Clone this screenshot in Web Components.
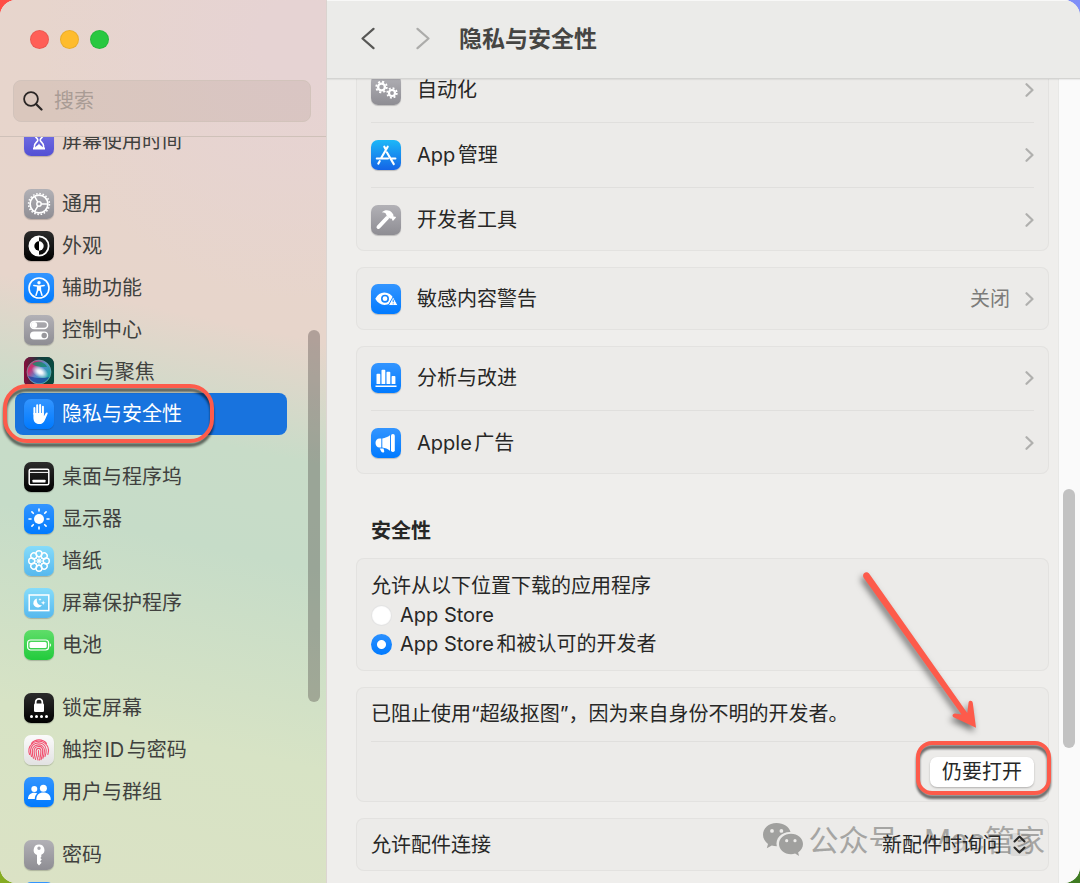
<!DOCTYPE html>
<html lang="zh-CN">
<head>
<meta charset="utf-8">
<title>隐私与安全性</title>
<style>
html {
  height: 100%;
}
body {
  margin: 0;
  height: 100%;
  overflow: hidden;
  font-family: Inter, "Noto Sans CJK SC", sans-serif;
  font-size: 20px;
  line-height: 30px;
  text-autospace: normal;
  color: #272726;
  background:
    linear-gradient(90deg, #ff4d45, #7f8ff8) top / 100% 50% no-repeat,
    linear-gradient(90deg, #86ac22, #3f7b22) bottom / 100% 50% no-repeat;
}
</style>
</head>
<body>
<settings-window>
  <settings-sidebar slot="sidebar">
    <sidebar-group>
      <sidebar-item icon="hourglass">屏幕使用时间</sidebar-item>
    </sidebar-group>
    <sidebar-group>
      <sidebar-item icon="gear">通用</sidebar-item>
      <sidebar-item icon="appearance">外观</sidebar-item>
      <sidebar-item icon="accessibility">辅助功能</sidebar-item>
      <sidebar-item icon="control">控制中心</sidebar-item>
      <sidebar-item icon="siri">Siri与聚焦</sidebar-item>
      <sidebar-item icon="hand" selected>隐私与安全性</sidebar-item>
    </sidebar-group>
    <sidebar-group>
      <sidebar-item icon="dock">桌面与程序坞</sidebar-item>
      <sidebar-item icon="display">显示器</sidebar-item>
      <sidebar-item icon="wallpaper">墙纸</sidebar-item>
      <sidebar-item icon="saver">屏幕保护程序</sidebar-item>
      <sidebar-item icon="battery">电池</sidebar-item>
    </sidebar-group>
    <sidebar-group>
      <sidebar-item icon="lock">锁定屏幕</sidebar-item>
      <sidebar-item icon="touch">触控ID与密码</sidebar-item>
      <sidebar-item icon="users">用户与群组</sidebar-item>
    </sidebar-group>
    <sidebar-group>
      <sidebar-item icon="key">密码</sidebar-item>
      <sidebar-item icon="blank"></sidebar-item>
    </sidebar-group>
  </settings-sidebar>

  <settings-toolbar slot="toolbar">隐私与安全性</settings-toolbar>

  <settings-card>
    <settings-row icon="automation">自动化</settings-row>
    <settings-row icon="appstore">App管理</settings-row>
    <settings-row icon="hammer">开发者工具</settings-row>
  </settings-card>
  <settings-card>
    <settings-row icon="sensitive" value="关闭">敏感内容警告</settings-row>
  </settings-card>
  <settings-card>
    <settings-row icon="analytics">分析与改进</settings-row>
    <settings-row icon="ads">Apple广告</settings-row>
  </settings-card>
  <section-title>安全性</section-title>
  <settings-card>
    <download-source></download-source>
  </settings-card>
  <settings-card>
    <blocked-app></blocked-app>
    <blocked-action></blocked-action>
  </settings-card>
  <settings-card>
    <accessory-row></accessory-row>
  </settings-card>
</settings-window>

<script>
const blue = ['#3395ff', '#007aff'];
const gray = ['#b2b1b6', '#8e8d93'];
const black = ['#2c2c2c', '#000'];
const sky = ['#86dcfa', '#56b8ee'];

const stroke = 'fill="none" stroke="#fff"';

// every glyph is drawn on a 30 x 30 tile
const icons = {
  hourglass: {
    tile: ['#7b78e8', '#5350d4'],
    glyph: `<path d="M9 5.500h12M9 22.500h12" ${stroke} stroke-width="2"/>
      <path d="M10.500 6v2.500c0 2.500 3.300 3.500 3.300 5.500s-3.300 3-3.300 5.500V22h9v-2.500c0-2.500-3.300-3.500-3.300-5.500s3.300-3 3.300-5.500V6" ${stroke} stroke-width="1.600"/>
      <path d="M11.500 22c0-2.500 3.500-2.500 3.500-5 0 2.500 3.500 2.500 3.500 5z" fill="#fff"/>`,
  },
  gear: {
    tile: gray,
    glyph: `<circle cx="15" cy="15" r="10.400" ${stroke} stroke-width="1.600" stroke-dasharray="1.600 1.667"/>
      <circle cx="15" cy="15" r="8.900" ${stroke} stroke-width="1.700"/>
      <circle cx="15" cy="15" r="2.200" ${stroke} stroke-width="1.500"/>
      <path d="M17.200 15h6.500M13.900 13.100 10.600 7.400M13.900 16.900l-3.300 5.700" ${stroke} stroke-width="1.500"/>`,
  },
  appearance: {
    tile: black,
    glyph: `<circle cx="15" cy="15" r="9.600" ${stroke} stroke-width="1.800"/>
      <path d="M15 5.400a9.600 9.600 0 0 0 0 19.200z" fill="#fff"/>
      <path d="M15 10.300a4.700 4.700 0 0 0 0 9.400z" fill="#000"/>
      <path d="M15 10.300a4.700 4.700 0 0 1 0 9.400z" fill="#fff"/>`,
  },
  accessibility: {
    tile: blue,
    glyph: `<circle cx="15" cy="15" r="10" ${stroke} stroke-width="1.600"/>
      <circle cx="15" cy="9.700" r="1.700" fill="#fff"/>
      <path d="M9.800 12.400 15 13.300l5.200-.9M15 13.300v4M13.700 13.500l-.2 4-1.500 4.700M16.300 13.500l.2 4 1.500 4.700M14 16h2" ${stroke} stroke-width="1.500" stroke-linecap="round" stroke-linejoin="round"/>`,
  },
  control: {
    tile: gray,
    glyph: `<rect x="6.600" y="6.600" width="17" height="7" rx="3.500" ${stroke} stroke-width="1.500"/>
      <circle cx="10.200" cy="10.100" r="3" fill="#fff"/>
      <rect x="6" y="16.500" width="18.200" height="8" rx="4" fill="#fff"/>
      <circle cx="20.200" cy="20.500" r="2.700" fill="#98979c"/>`,
  },
  siri: {
    tile: ['#3a1634', '#10203a'],
    glyph: `<defs>
        <linearGradient id="edge"><stop stop-color="#8a0c3c"/><stop offset=".5" stop-color="#163b3c"/><stop offset="1" stop-color="#064c40"/></linearGradient>
        <linearGradient id="orb" x2="1" y2=".7"><stop stop-color="#4f8d78"/><stop offset=".25" stop-color="#d22c6c"/><stop offset=".55" stop-color="#5a8bd0"/><stop offset="1" stop-color="#15aaa0"/></linearGradient>
        <radialGradient id="glow"><stop stop-color="#fff"/><stop offset=".3" stop-color="#fff" stop-opacity=".9"/><stop offset="1" stop-color="#fff" stop-opacity="0"/></radialGradient>
      </defs>
      <rect width="30" height="30" rx="7" fill="url(#edge)"/>
      <circle cx="15" cy="15" r="12" fill="url(#orb)"/>
      <path d="M4 19c4 9 17 10 21 1-6 2-14 1-21-1z" fill="#1b3a9c" opacity=".7"/>
      <path d="M8 7c5-4 13-2 15 3-5 0-9 1-15-3z" fill="#17896a" opacity=".8"/>
      <ellipse cx="16" cy="15" rx="9" ry="5.500" fill="url(#glow)" transform="rotate(30 16 15)"/>
      <circle cx="15" cy="15" r="12" fill="none" stroke="#7fa9b4" stroke-width=".6"/>`,
  },
  hand: {
    tile: blue,
    glyph: `<path d="M10.400 15V9M13.200 14V6.300M16.100 14V6M18.900 15V7.800" ${stroke} stroke-width="2" stroke-linecap="round"/>
      <path d="M9.400 14h10.500v3.200l1.900-3.200c.7-1.100 2.200-.5 1.800.7l-2.700 6.200c-1.100 2.700-2.900 4.200-5.700 4.200-3.700 0-5.800-2.500-5.800-6.300z" fill="#fff"/>`,
  },
  dock: {
    tile: black,
    glyph: `<rect x="5.200" y="7.200" width="19.600" height="15.600" rx="1.500" ${stroke} stroke-width="1.500"/>
      <path d="M5.500 10.400h19" ${stroke} stroke-width="1"/>
      <rect x="8.500" y="17.700" width="13" height="2.800" rx=".6" fill="#fff"/>`,
  },
  display: {
    tile: blue,
    glyph: `<circle cx="15" cy="15" r="5" fill="#fff"/>
      <path d="M15 5v2M15 23v2M5 15h2M23 15h2M7.900 7.900l1.400 1.400M20.700 20.700l1.400 1.400M7.900 22.100l1.400-1.400M20.700 9.300l1.400-1.400" ${stroke} stroke-width="1.600" stroke-linecap="round"/>`,
  },
  wallpaper: {
    tile: sky,
    glyph: `<g ${stroke} stroke-width="1.400">
        ${[0, 45, 90, 135, 180, 225, 270, 315].map((a) => `<circle cx="15" cy="7.700" r="3" transform="rotate(${a} 15 15)"/>`).join('')}
        <path d="M15 11v8M11 15h8M12.200 12.200l5.600 5.600M17.800 12.200l-5.600 5.600" stroke-width=".9"/>
      </g>
      <circle cx="15" cy="15" r="1.800" fill="#fff"/>`,
  },
  saver: {
    tile: sky,
    glyph: `<rect x="5.200" y="7" width="19.600" height="15.600" ${stroke} stroke-width="1.500"/>
      <path d="M13 10.500a4.600 4.600 0 1 0 5 6.600c-3.700.8-6-3-5-6.600z" fill="#fff"/>
      <path d="m19.200 12.500.6 1.700 1.700.6-1.700.6-.6 1.700-.6-1.700-1.700-.6 1.700-.6zM16 10l.4 1.100 1.100.4-1.100.4L16 13l-.4-1.100-1.100-.4 1.100-.4z" fill="#fff"/>`,
  },
  battery: {
    tile: ['#5fdd69', '#22cb3c'],
    glyph: `<rect x="3.600" y="10" width="21" height="10" rx="3" ${stroke} stroke-width="1.200"/>
      <rect x="5.500" y="11.900" width="17.200" height="6.200" rx="1.500" fill="#fff"/>
      <path d="M25.900 13.200v3.600c1.500-.5 1.500-3.100 0-3.600z" fill="#fff"/>`,
  },
  lock: {
    tile: black,
    glyph: `<path d="M11.700 11V8.800c0-4 6.600-4 6.600 0V11" ${stroke} stroke-width="1.700"/>
      <rect x="10" y="10.500" width="10" height="8.500" rx="1.300" fill="#fff"/>
      <path d="M7.500 23.500h.01M12.500 23.500h.01M17.500 23.500h.01M22.500 23.500h.01" ${stroke} stroke-width="3" stroke-linecap="round"/>`,
  },
  touch: {
    tile: ['#fbfbfb', '#e2e2e2'],
    glyph: `<g fill="none" stroke="#f2506f" stroke-width="1.100" stroke-linecap="round">
        <path d="M7.500 8.400C11.500 3.700 18.500 3.700 22.500 8.400"/>
        <path d="M5.600 19.500c-1.500-4-.6-8 1.500-9.500C11 5 19 5 23 10.500c1.700 2.500 1.900 5.500.8 9"/>
        <path d="M7.500 21.500c-.8-2-1.200-4-1-6.200C7 6 21.500 5 22.200 14.700c.1 2.500-.2 4.500-1.200 6.800"/>
        <path d="M9.500 23.300c-.8-2-1.300-4.600-1.200-7.600C8.700 8 20 8 20.400 15c.1 3-.5 5.700-1.500 8.300"/>
        <path d="M11.600 24.500c-.9-2.500-1.600-5.500-1.500-8.500.3-6 8.200-6 8.600-.6.100 3.300-.6 6.300-1.600 9.200"/>
        <path d="M14 25c-1.200-3-2-6-1.900-9 .3-3.500 4.500-3.500 4.800-.2.100 3.200-.5 6.200-1.300 9.200"/>
        <path d="M14.500 15.500c0 3 .2 4.500.4 6.500"/>
      </g>`,
  },
  users: {
    tile: blue,
    glyph: `<circle cx="10.300" cy="12" r="3" fill="#fff"/>
      <path d="M4 22c0-4 2.500-6.300 6.300-6.300 1.200 0 2.200.3 3 .8-1.600 1.300-2.500 3.200-2.500 5.500z" fill="#fff"/>
      <circle cx="19.400" cy="11.200" r="3.500" fill="#fff"/>
      <path d="M12.300 22.400c0-4.300 2.900-6.900 7.100-6.900s7.300 2.600 7.300 6.900c0 .4-.3.600-.7.600H13c-.4 0-.7-.2-.7-.6z" fill="#fff"/>`,
  },
  key: {
    tile: gray,
    glyph: `<path fill-rule="evenodd" d="M15 4.500a5.400 5.400 0 0 0-2 10.400v8.400l2 2.200 2.600-2.700-1.500-1.600 1.700-1.700-1.500-1.600 1-1v-2.100A5.400 5.400 0 0 0 15 4.500zm0 2.100a1.700 1.700 0 1 1 0 3.400 1.700 1.700 0 0 1 0-3.400z" fill="#fff"/>`,
  },
  blank: { tile: blue, glyph: '' },
  automation: {
    tile: gray,
    glyph: `<g ${stroke}>
        <circle cx="10.500" cy="12" r="3.400" stroke-width="2.300"/>
        <circle cx="10.500" cy="12" r="5.300" stroke-width="1.800" stroke-dasharray="2.080 2.080"/>
        <circle cx="21" cy="18" r="3" stroke-width="2.200"/>
        <circle cx="21" cy="18" r="4.800" stroke-width="1.800" stroke-dasharray="1.885 1.885"/>
      </g>`,
  },
  appstore: {
    tile: ['#1db8f8', '#1464e6'],
    glyph: `<path d="M16.700 6.700 10.300 17.800M13.300 6.700l1.400 2.500M15.800 12.300l7 11.800M8.700 21.200l-1.400 2.400M5.800 18.500h11.200M20.500 18.500h3.900" ${stroke} stroke-width="2.100" stroke-linecap="round"/>`,
  },
  hammer: {
    tile: gray,
    glyph: `<path d="M7.500 22 16 13" ${stroke} stroke-width="4" stroke-linecap="round"/>
      <path d="M10.800 7.200c3.200-2.900 7.600-2.600 10 .2l1.500 2 .2 2 2 .3c.5.200.6.600.3 1l-2.400 2.900c-.3.300-.8.200-1-.1l-.5-1.700-2-.2-3.600-3.300c.2-2-1.700-3.100-4.500-3.100z" fill="#fff"/>`,
  },
  sensitive: {
    tile: blue,
    glyph: `<path d="M4.300 14.700C6.500 10.800 9.700 8.600 13.300 8.600c4 0 7.300 2 9.600 6.100-2 4-5.400 6.200-9.400 6.200-3.700 0-7-2.200-9.200-6.200z" fill="#fff"/>
      <circle cx="14" cy="14.700" r="3.200" fill="none" stroke="#1686ff" stroke-width="1.600"/>
      <path d="M22.200 12.700 27 21.500h-9.700z" fill="#fff" stroke="#1686ff" stroke-width="1"/>
      <path d="M22.200 15.500v2.700M22.200 19.500v.8" fill="none" stroke="#1686ff" stroke-width="1.100"/>`,
  },
  analytics: {
    tile: blue,
    glyph: `<path d="M5.500 11.500c0-.5.300-.8.800-.8h2.200c.5 0 .8.300.8.800v9.500H5.500zM10.500 7.500c0-.5.300-.8.800-.8h2.200c.5 0 .8.300.8.800V21h-3.800zM15.500 9.500c0-.5.300-.8.800-.8h2.200c.5 0 .8.300.8.800V21h-3.800zM20.600 13.700c0-.5.300-.8.800-.8h2.200c.5 0 .8.300.8.800V21h-3.800zM4.500 22.500h21V24h-21z" fill="#fff"/>`,
  },
  ads: {
    tile: blue,
    glyph: `<path d="M10.300 10.500v9H8.500c-2.300 0-4-2-4-4.500s1.700-4.500 4-4.500zM11.300 10.400c2.800-.3 5.500-1.600 7.700-3.200v15.600c-2.200-1.700-4.900-2.900-7.700-3.200z" fill="#fff"/>
      <rect x="20" y="6" width="3.800" height="18" rx="1.800" fill="#fff"/>
      <path d="M8.700 20.500h3.800l.7 2.500c.4 1.700-2 2.200-2.800.8z" fill="#fff"/>`,
  },
};

class BaseElement extends HTMLElement {
  constructor() {
    super();
    this.attachShadow({ mode: 'open' });
  }
  connectedCallback() {
    this.shadowRoot.innerHTML = this.html;
  }
}

class SettingsIcon extends BaseElement {
  get html() {
    const { tile, glyph } = icons[this.getAttribute('name')];
    return `
      <style>
        :host {
          display: block;
          flex-shrink: 0;
          width: 30px;
          height: 30px;
          border-radius: 7px;
          background: linear-gradient(${tile[0]}, ${tile[1]});
          box-shadow: 0 1px 1px rgba(0, 0, 0, 0.2);
        }
        svg { display: block; }
      </style>
      <svg width="30" height="30" viewBox="0 0 30 30" aria-hidden="true">${glyph}</svg>
    `;
  }
}

class SettingsWindow extends BaseElement {
  get html() {
    return `
      <style>
        :host {
          display: flex;
          height: 100%;
          border-radius: 16px;
          overflow: hidden;
          background-color: #efeeec;
        }
        main {
          flex: 1;
          min-width: 0;
          display: flex;
          flex-direction: column;
          border-left: 1px solid #dcd5d1;
        }
        .view {
          flex: 1;
          min-height: 0;
          display: flex;
        }
        .content {
          flex: 1;
          min-width: 0;
          overflow: hidden;
          padding: 0 9px 0 29px;
        }
        /* the list is scrolled part of the way down its first card */
        .scrolled {
          margin-top: -21px;
        }
        .track {
          flex-shrink: 0;
          box-sizing: border-box;
          width: 22px;
          padding: 410px 4px 0;
          background-color: #fafafa;
          border-left: 1px solid #e8e8e6;
        }
        .thumb {
          height: 259px;
          width: 12px;
          border-radius: 6px;
          background-color: #c2c2c2;
        }
      </style>
      <slot name="sidebar"></slot>
      <main>
        <slot name="toolbar"></slot>
        <div class="view">
          <div class="content"><div class="scrolled"><slot></slot></div></div>
          <div class="track"><div class="thumb"></div></div>
        </div>
      </main>
    `;
  }
}

class SettingsSidebar extends BaseElement {
  get html() {
    return `
      <style>
        :host {
          flex-shrink: 0;
          display: flex;
          flex-direction: column;
          position: relative;
          width: 326px;
          color: #40413e;
          background:
            radial-gradient(circle at 300px 40px, #e6d3d3 40px, rgba(230, 211, 211, 0) 260px),
            linear-gradient(192deg, #e7d5cd 0, #e7d5cb 36%, #c8dcc8 49%, #c6dcc8 60%, #d7e3c5 81%, #dbe2c5 100%);
        }
        header {
          flex-shrink: 0;
          box-sizing: border-box;
          height: 137px;
          padding: 30px 15px 0 13px;
          border-bottom: 1px solid #cfc1b9;
        }
        .lights {
          display: flex;
          gap: 11px;
          padding-left: 17px;
        }
        .lights button {
          width: 19px;
          height: 19px;
          padding: 0;
          border: 1px solid rgba(0, 0, 0, 0.08);
          border-radius: 50%;
        }
        label {
          display: flex;
          align-items: center;
          gap: 11px;
          box-sizing: border-box;
          height: 42px;
          margin-top: 31px;
          padding: 0 9px;
          border: 1px solid #d2c3bb;
          border-radius: 8px;
          background-color: rgba(120, 95, 80, 0.12);
        }
        input {
          flex: 1;
          min-width: 0;
          padding: 0;
          border: 0;
          outline: 0;
          background: none;
          font: inherit;
        }
        input::placeholder {
          color: #a99c95;
        }
        nav {
          flex: 1;
          min-height: 0;
          overflow: hidden;
        }
        .scrolled {
          margin-top: -17px;
        }
        .thumb {
          position: absolute;
          right: 6px;
          top: 330px;
          width: 12px;
          height: 372px;
          border-radius: 6px;
          background-color: rgba(60, 50, 50, 0.32);
        }
      </style>
      <header>
        <div class="lights">
          <button style="background:#ff5f57" aria-label="关闭"></button>
          <button style="background:#febc2e" aria-label="最小化"></button>
          <button style="background:#28c840" aria-label="缩放"></button>
        </div>
        <label>
          <svg width="20" height="20" viewBox="0 0 20 20" fill="none" stroke="#2a2625" stroke-width="1.800" stroke-linecap="round" aria-hidden="true">
            <circle cx="8" cy="8" r="6.900"/><path d="m13 13 5.500 5.500" stroke-width="2.200"/>
          </svg>
          <input type="search" placeholder="搜索" aria-label="搜索">
        </label>
      </header>
      <nav><div class="scrolled"><slot></slot></div></nav>
      <div class="thumb"></div>
    `;
  }
}

class SidebarGroup extends BaseElement {
  get html() {
    return `
      <style>
        :host {
          display: block;
          margin-bottom: 21px;
        }
      </style>
      <slot></slot>
    `;
  }
}

class SidebarItem extends BaseElement {
  get html() {
    return `
      <style>
        :host {
          display: block;
          position: relative;
          margin: 0 39px 0 15px;
        }
        a {
          display: flex;
          align-items: center;
          gap: 8px;
          height: 42px;
          padding-left: 9px;
          border-radius: 8px;
          color: inherit;
          text-decoration: none;
        }
        :host([selected]) a {
          color: #fff;
          background-color: #1873de;
        }
        mark-ring {
          left: -12px;
          top: -9px;
          width: 211px;
          height: 59px;
          --ring-radius: 24px;
        }
      </style>
      <a href="#"><settings-icon name="${this.getAttribute('icon')}"></settings-icon><slot></slot></a>
      ${this.hasAttribute('selected') ? '<mark-ring></mark-ring>' : ''}
    `;
  }
}

class MarkRing extends BaseElement {
  get html() {
    return `
      <style>
        :host {
          position: absolute;
          z-index: 1;
          box-sizing: border-box;
          border: 4px solid #fd5b4b;
          border-radius: var(--ring-radius);
          filter: drop-shadow(0 4px 1px rgba(0, 0, 0, 0.55));
          pointer-events: none;
        }
      </style>
    `;
  }
}

class SettingsToolbar extends BaseElement {
  get html() {
    return `
      <style>
        :host {
          flex-shrink: 0;
          display: flex;
          align-items: center;
          box-sizing: border-box;
          height: 79px;
          padding-left: 34px;
          background-color: #ebebe9;
          border-bottom: 1px solid #d4d4d2;
          box-shadow: 0 1px 1px rgba(0, 0, 0, 0.06), inset 0 1px #f8f8f7;
          z-index: 1;
        }
        button {
          display: block;
          width: 14px;
          height: 24px;
          padding: 0;
          border: 0;
          background: none;
          color: #575755;
        }
        button:disabled {
          margin-left: 41px;
          color: #acacaa;
        }
        svg { display: block; }
        h1 {
          margin: 0 0 0 29px;
          font-size: 23px;
          font-weight: 700;
          color: #454543;
        }
      </style>
      <button aria-label="返回">
        <svg width="14" height="24" viewBox="0 0 14 24" fill="none" stroke="currentColor" stroke-width="2.200" stroke-linecap="round" stroke-linejoin="round"><path d="M12.500 1.800 1.500 11.500l11 9.700"/></svg>
      </button>
      <button aria-label="前进" disabled>
        <svg width="14" height="24" viewBox="0 0 14 24" fill="none" stroke="currentColor" stroke-width="2.200" stroke-linecap="round" stroke-linejoin="round"><path d="m1.500 1.800 11 9.700-11 9.700"/></svg>
      </button>
      <h1><slot></slot></h1>
    `;
  }
}

class SettingsCard extends BaseElement {
  get html() {
    return `
      <style>
        :host {
          display: block;
          margin-bottom: 16px;
          padding: 0 15px;
          border-radius: 8px;
          background-color: #ecebe9;
          box-shadow: inset 0 0 0 1px #e3e2e0;
        }
        ::slotted(:not(:first-child)) {
          margin-top: 1px;
          border-top: 1px solid #e0dfdd;
        }
      </style>
      <slot></slot>
    `;
  }
}

class SettingsRow extends BaseElement {
  get html() {
    return `
      <style>
        :host { display: block; }
        button {
          display: flex;
          align-items: center;
          width: 100%;
          height: 63px;
          padding: 0;
          border: 0;
          background: none;
          font: inherit;
          color: inherit;
          text-align: left;
        }
        .label {
          flex: 1;
          margin-left: 16px;
        }
        .value {
          margin-right: 15px;
          color: #7c7c7a;
        }
      </style>
      <button>
        <settings-icon name="${this.getAttribute('icon')}"></settings-icon>
        <span class="label"><slot></slot></span>
        <span class="value">${this.getAttribute('value') || ''}</span>
        <svg width="9" height="14" viewBox="0 0 9 14" fill="none" stroke="#b0b0ae" stroke-width="2.200" stroke-linecap="round" stroke-linejoin="round" aria-hidden="true"><path d="M1.500 1.200 7.500 7l-6 5.800"/></svg>
      </button>
    `;
  }
}

class SectionTitle extends BaseElement {
  get html() {
    return `
      <style>
        :host {
          display: block;
          margin: 42px 15px 12px;
        }
        h2 {
          margin: 0;
          font-size: 20px;
          font-weight: 700;
        }
      </style>
      <h2><slot></slot></h2>
    `;
  }
}

class DownloadSource extends BaseElement {
  get html() {
    return `
      <style>
        :host {
          display: block;
          padding: 14px 0 12px;
          line-height: 29px;
        }
        fieldset {
          margin: 0;
          padding: 0;
          border: 0;
        }
        legend {
          padding: 0;
        }
        label {
          display: flex;
          align-items: center;
          gap: 8px;
        }
        input {
          appearance: none;
          box-sizing: border-box;
          width: 21px;
          height: 21px;
          margin: 0;
          border-radius: 50%;
          background-color: #fff;
          box-shadow: inset 0 0 1px 1px rgba(0, 0, 0, 0.12);
        }
        input:checked {
          background: radial-gradient(circle, #fff 4px, rgba(255, 255, 255, 0) 5px), linear-gradient(#2b90ff, #007aff);
          box-shadow: none;
        }
      </style>
      <fieldset>
        <legend>允许从以下位置下载的应用程序</legend>
        <label><input type="radio" name="source">App Store</label>
        <label><input type="radio" name="source" checked>App Store和被认可的开发者</label>
      </fieldset>
    `;
  }
}

class BlockedApp extends BaseElement {
  get html() {
    return `
      <style>
        :host {
          display: flex;
          align-items: center;
          height: 53px;
        }
      </style>
      <span>已阻止使用“超级抠图”，因为来自身份不明的开发者。</span>
    `;
  }
}

class BlockedAction extends BaseElement {
  get html() {
    return `
      <style>
        :host {
          display: flex;
          justify-content: flex-end;
          align-items: center;
          height: 60px;
        }
        .anchor {
          position: relative;
        }
        button {
          display: block;
          height: 30px;
          padding: 0 12px;
          border: 0;
          border-radius: 7px;
          background-color: #fff;
          box-shadow: 0 1px 2px rgba(0, 0, 0, 0.25);
          font: inherit;
          color: inherit;
        }
        mark-ring {
          inset: -16px -17px -8px -14px;
          --ring-radius: 16px;
        }
        .arrow {
          position: absolute;
          right: 54px;
          bottom: 56px;
          filter: drop-shadow(-2px 4px 3px rgba(0, 0, 0, 0.5));
          pointer-events: none;
        }
      </style>
      <div class="anchor">
        <button>仍要打开</button>
        <mark-ring></mark-ring>
        <svg class="arrow" width="130" height="170" viewBox="850 560 130 170" fill="#fd5b4b" aria-hidden="true">
          <path d="M869.600 573.200 967.300 712 968.500 701.800C969 699 972.500 699.300 972.800 702L976 726.800 953.600 716.300C951.500 714.900 952.800 712.200 955.200 712.400L961.500 713.500 864 577.300C860.800 572.800 866.600 568.900 869.600 573.200z"/>
        </svg>
      </div>
    `;
  }
}

class AccessoryRow extends BaseElement {
  get html() {
    return `
      <style>
        :host {
          display: flex;
          align-items: center;
          justify-content: space-between;
          position: relative;
          height: 53px;
        }
        .watermark {
          position: absolute;
          right: -11px;
          top: 0;
          display: flex;
          align-items: center;
          gap: 4px;
          font-size: 30px;
          line-height: 44px;
          white-space: pre;
          text-autospace: no-autospace;
          color: #a5a5a3;
        }
        .picker {
          position: relative;
          display: flex;
          align-items: center;
          gap: 6px;
          padding-right: 3px;
        }
        select {
          appearance: none;
          padding: 0;
          border: 0;
          outline: 0;
          background: linear-gradient(90deg, #ecebe9 40px, rgba(236, 235, 233, 0)) bottom / 100% 16px no-repeat;
          font: inherit;
          color: inherit;
        }
        svg { display: block; }
      </style>
      <label for="accessory">允许配件连接</label>
      <div class="watermark">
        <svg width="42" height="36" viewBox="0 0 42 36" fill="#a0a09e" aria-hidden="true">
          <path fill-rule="evenodd" d="M14.500 1C6.500 1 1 6.200 1 12.800c0 3.700 1.900 6.900 5 9.100l-1.200 4.300 5-2.600c1.600.4 3.200.6 5 .6-1.900-8 5-14.600 13.700-14.200C27 4.700 21.700 1 14.500 1zM10 7a1.900 1.900 0 1 1 0 3.800A1.900 1.900 0 0 1 10 7zm9.400 0a1.900 1.900 0 1 1 0 3.800 1.900 1.900 0 0 1 0-3.800z"/>
          <path fill-rule="evenodd" d="M29 11.800c-6.700 0-12 4.500-12 10.200s5.300 10.200 12 10.200c1.400 0 2.800-.2 4.100-.6l4 2.300-1-3.500c3-1.900 4.900-5 4.900-8.400 0-5.700-5.300-10.200-12-10.200zm-4.300 5.300a1.600 1.600 0 1 1 0 3.200 1.600 1.600 0 0 1 0-3.200zm8.300 0a1.600 1.600 0 1 1 0 3.200 1.600 1.600 0 0 1 0-3.200z"/>
        </svg>
        <span>公众号 · Mac管家</span>
      </div>
      <div class="picker">
        <select id="accessory"><option>新配件时询问</option></select>
        <svg width="23" height="23" viewBox="0 0 23 23" aria-hidden="true">
          <rect width="23" height="23" rx="5" fill="#000" opacity=".07"/>
          <path d="m6.500 8.500 5-5 5 5M6.500 14.500l5 5 5-5" fill="none" stroke="#272726" stroke-width="2" stroke-linecap="round" stroke-linejoin="round"/>
        </svg>
      </div>
    `;
  }
}

const elements = {
  'settings-icon': SettingsIcon,
  'mark-ring': MarkRing,
  'settings-window': SettingsWindow,
  'settings-sidebar': SettingsSidebar,
  'sidebar-group': SidebarGroup,
  'sidebar-item': SidebarItem,
  'settings-toolbar': SettingsToolbar,
  'settings-card': SettingsCard,
  'settings-row': SettingsRow,
  'section-title': SectionTitle,
  'download-source': DownloadSource,
  'blocked-app': BlockedApp,
  'blocked-action': BlockedAction,
  'accessory-row': AccessoryRow,
};

for (const [name, element] of Object.entries(elements)) {
  if (!customElements.get(name)) {
    customElements.define(name, element);
  }
}
</script>
</body>
</html>
